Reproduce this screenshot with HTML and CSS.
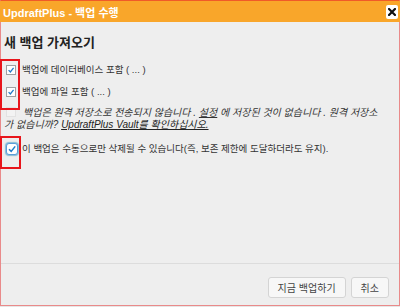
FILE: index.html
```html
<!doctype html>
<html lang="ko">
 <head>
	<meta charset="UTF-8">
	<title>UpdraftPlus - 백업 수행</title>
	<link rel="stylesheet" href="styles.css">
 </head>
 <body>
	<div class="dialog">
		<div class="titlebar">
			<span class="title">UpdraftPlus - 백업 수행</span>
			<a class="close" href="#">
				<svg width="8" height="8" viewBox="0 0 8 8"><path d="M1 1L7 7M7 1L1 7" stroke="#111" stroke-width="2.2" stroke-linecap="square"/></svg>
			</a>
		</div>
		<div class="content">
			<h2>새 백업 가져오기</h2>
			<div class="row first">
				<span class="cb"><svg viewBox="0 0 10 10"><path d="M2 5.2L4.2 7.4L8.2 2.4" fill="none" stroke="#1e7cc8" stroke-width="1.6"/></svg></span>
				<label>백업에 데이터베이스 포함 ( ... )</label>
			</div>
			<div class="row">
				<span class="cb"><svg viewBox="0 0 10 10"><path d="M2 5.2L4.2 7.4L8.2 2.4" fill="none" stroke="#1e7cc8" stroke-width="1.6"/></svg></span>
				<label>백업에 파일 포함 ( ... )</label>
			</div>
			<p class="note"><span class="cb ghost"></span><em>백업은 원격 저장소로 전송되지 않습니다 . <u>설정</u> 에 저장된 것이 없습니다 . 원격 저장소가 없습니까? <a href="#">UpdraftPlus Vault를 확인하십시오.</a></em></p>
			<div class="row lock">
				<span class="cb focus"><svg viewBox="0 0 10 10"><path d="M2 5.2L4.2 7.4L8.2 2.4" fill="none" stroke="#1e7cc8" stroke-width="1.5"/></svg></span>
				<label>이 백업은 수동으로만 삭제될 수 있습니다(즉, 보존 제한에 도달하더라도 유지).</label>
			</div>
			<div class="mark mark1"></div>
			<div class="mark mark2"></div>
		</div>
		<div class="footer">
			<button class="btn">지금 백업하기</button>
			<button class="btn">취소</button>
		</div>
	</div>
 </body>
</html>
```

FILE: styles.css
```css
*{
	padding:0;
	margin:0;
	box-sizing:border-box;
}
body{
	background:#e6e6e6;
	font-family:'Liberation Sans','Noto Sans CJK KR',sans-serif;
	color:#333;
}
.dialog{
	width:400px;
	height:306px;
	display:flex;
	flex-direction:column;
	background:#eeeeee;
	border:1px solid #e98a8a;
	border-top-color:#f05a28;
}
.titlebar{
	height:21px;
	background:#f9a62a;
	display:flex;
	align-items:center;
	justify-content:space-between;
	padding:0 2px 0 3px;
	margin:0 -1px;
}
.title{
	color:#fff;
	font-size:11px;
	font-weight:bold;
}
.close{
	width:12px;
	height:14px;
	background:#fff;
	border-radius:2px;
	display:flex;
	align-items:center;
	justify-content:center;
}
.content{
	flex:1;
	position:relative;
	padding:0 3px;
}
h2{
	font-size:13px;
	line-height:16px;
	margin-top:13px;
	color:#222;
}
.row{
	display:flex;
	align-items:center;
	gap:6px;
	font-size:9.5px;
	line-height:14px;
	height:14px;
	margin-top:8px;
	padding-left:2px;
}
.row.first{
	margin-top:12px;
}
.cb{
	width:10px;
	height:10px;
	background:#fff;
	border:1px solid #a0a0a0;
	display:inline-block;
	flex:none;
}
.cb svg{
	display:block;
	width:100%;
	height:100%;
}
.cb.ghost{
	border-color:#e2e2e2;
	background:#f3f3f3;
	vertical-align:-1px;
	margin:0 7px 0 2px;
}
.cb.focus{
	width:12px;
	height:12px;
	border:1px solid #5b9dd9;
	border-radius:3px;
	box-shadow:0 0 1px 1px rgba(30,140,190,.5);
}
.row.lock{
	margin-top:11px;
	gap:4px;
}
.note{
	font-size:10px;
	line-height:12px;
	margin-top:8px;
	padding-right:10px;
}
.note a{
	color:#222;
}
.mark{
	position:absolute;
	left:-1px;
	border:2px solid #e8151b;
}
.mark1{
	top:37px;
	width:20px;
	height:51px;
}
.mark2{
	top:114px;
	width:21px;
	height:33px;
}
.footer{
	height:42px;
	border-top:1px solid #dcdcdc;
	display:flex;
	justify-content:flex-end;
	gap:5px;
	padding:13px 10px 0 0;
}
.btn{
	height:21px;
	padding:0 9px;
	font-family:'Liberation Sans','Noto Sans CJK KR',sans-serif;
	font-size:10px;
	color:#444;
	background:#f7f7f7;
	border:1px solid #d4d4d4;
	border-radius:3px;
}
```
